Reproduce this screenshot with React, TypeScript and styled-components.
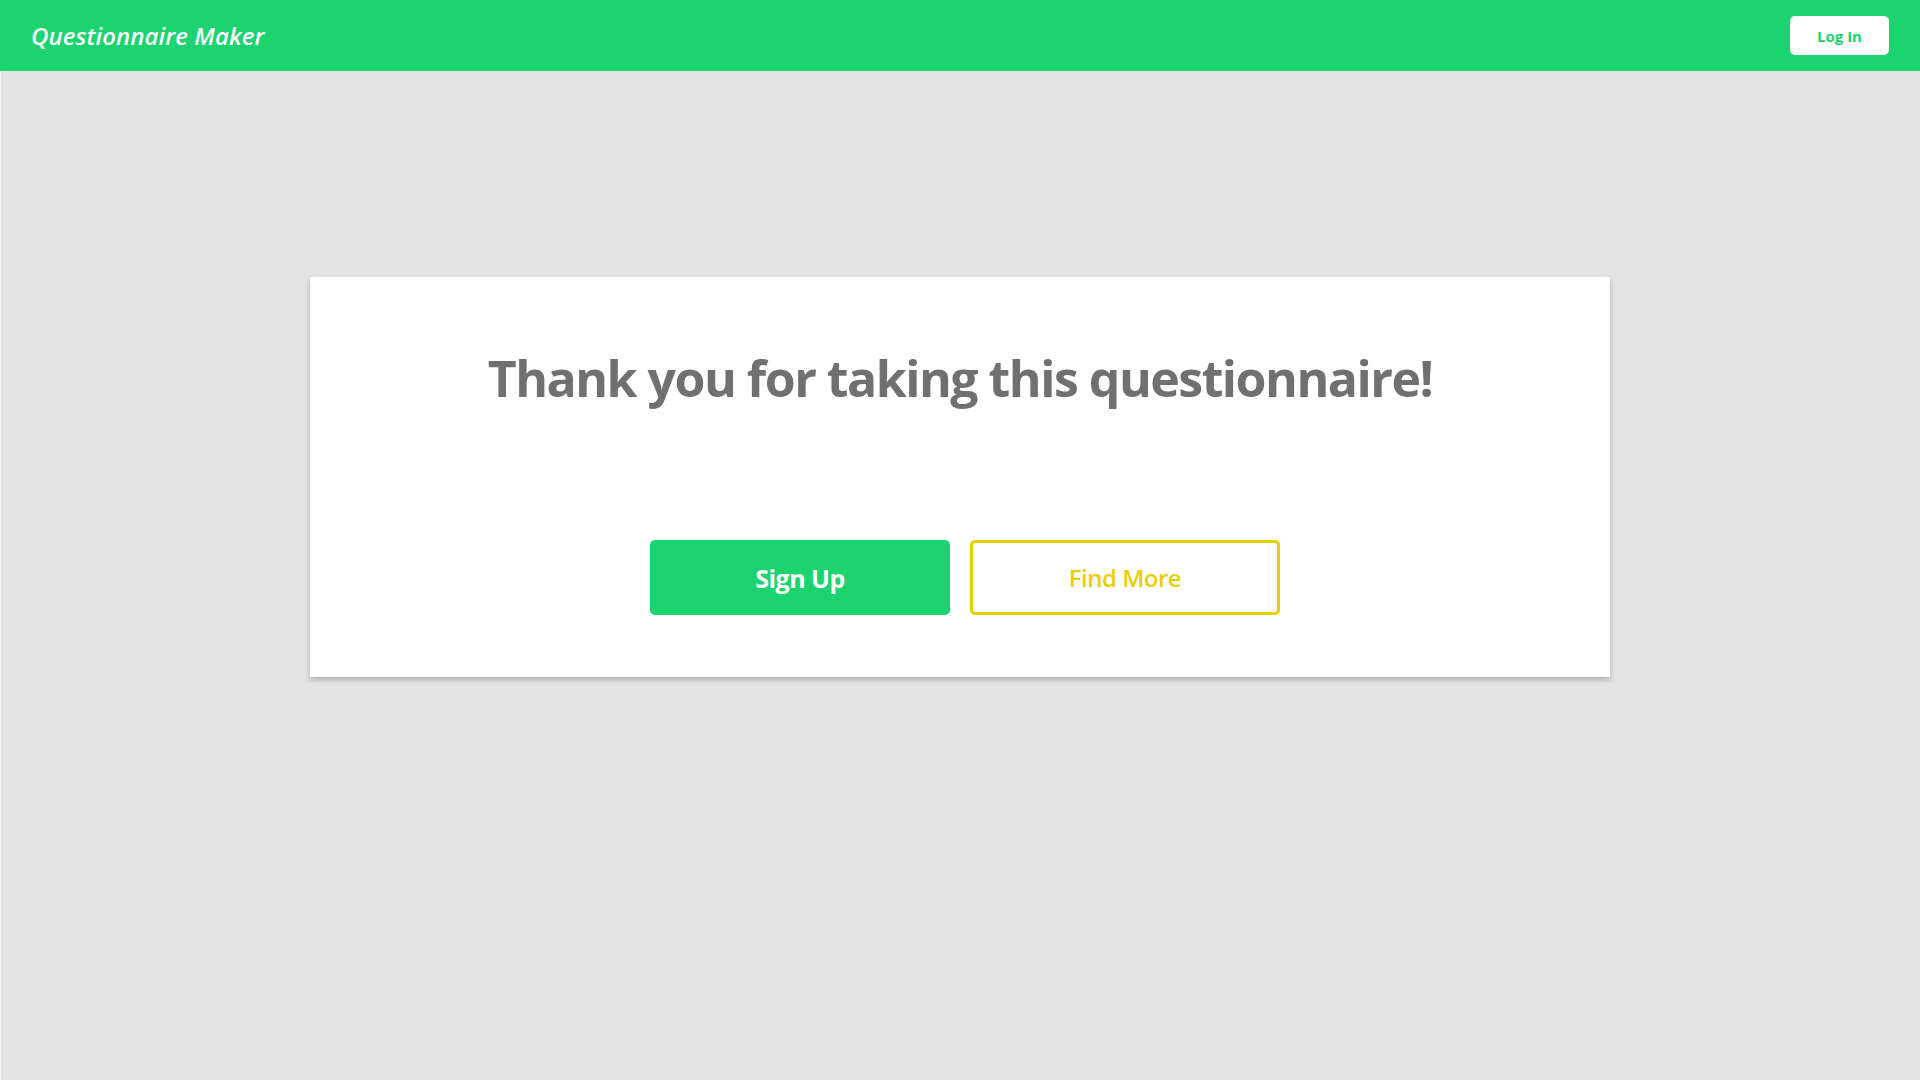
import styled, { createGlobalStyle } from 'styled-components';

const GREEN = '#1bd36f';
const YELLOW = '#e8cf00';

const GlobalStyle = createGlobalStyle`
    * {
        box-sizing: border-box;
    }

    body {
        margin: 0;
        background: #e3e3e3;
        font-family: 'Open Sans', 'Noto Sans', sans-serif;
    }
`;

export default function App() {
    return (
        <>
            <GlobalStyle />
            <Page>
                <TopBar>
                    <Brand>Questionnaire Maker</Brand>
                    <LoginButton type="button">Log In</LoginButton>
                </TopBar>
                <Main>
                    <Card>
                        <Heading>Thank you for taking this questionnaire!</Heading>
                        <Actions>
                            <ActionButton type="button" $variant="solid">
                                Sign Up
                            </ActionButton>
                            <ActionButton type="button" $variant="outline">
                                Find More
                            </ActionButton>
                        </Actions>
                    </Card>
                </Main>
            </Page>
        </>
    );
}

const Page = styled.div`
    min-height: 100vh;
    background: #e3e3e3;
    box-shadow: inset 1px 0 0 #f4f4f4;
`;

const TopBar = styled.header`
    height: 71px;
    background: ${GREEN};
    display: flex;
    align-items: center;
    justify-content: space-between;
    padding: 0 31px;
`;

const Brand = styled.h1`
    margin: 0;
    color: #ffffff;
    font-size: 24px;
    font-style: italic;
    font-weight: 600;
    letter-spacing: 0.1px;
`;

const LoginButton = styled.button`
    width: 99px;
    height: 39px;
    border: none;
    border-radius: 5px;
    background: #ffffff;
    color: ${GREEN};
    font-family: inherit;
    font-size: 15px;
    font-weight: 700;
    cursor: pointer;
`;

const Main = styled.main`
    display: flex;
    justify-content: center;
    padding-top: 206px;
`;

const Card = styled.section`
    width: 1300px;
    height: 400px;
    background: #ffffff;
    box-shadow: 0 3px 5px rgba(0, 0, 0, 0.22);
    padding: 71px 0 62px;
    display: flex;
    flex-direction: column;
    align-items: center;
    justify-content: space-between;
`;

const Heading = styled.h2`
    margin: 0;
    color: #707070;
    font-size: 50px;
    line-height: 60px;
    font-weight: 700;
    letter-spacing: -1.5px;
    text-align: center;
`;

const Actions = styled.div`
    display: flex;
    gap: 20px;
    padding-left: 10px;
`;

const ActionButton = styled.button<{ $variant: 'solid' | 'outline' }>`
    width: ${(p) => (p.$variant === 'solid' ? '300px' : '310px')};
    height: 75px;
    border-radius: 5px;
    border: 3px solid ${(p) => (p.$variant === 'solid' ? GREEN : YELLOW)};
    background: ${(p) => (p.$variant === 'solid' ? GREEN : '#ffffff')};
    color: ${(p) => (p.$variant === 'solid' ? '#ffffff' : YELLOW)};
    font-family: inherit;
    font-size: ${(p) => (p.$variant === 'solid' ? '25px' : '24px')};
    font-weight: ${(p) => (p.$variant === 'solid' ? 700 : 600)};
    letter-spacing: -0.5px;
    cursor: pointer;
`;
